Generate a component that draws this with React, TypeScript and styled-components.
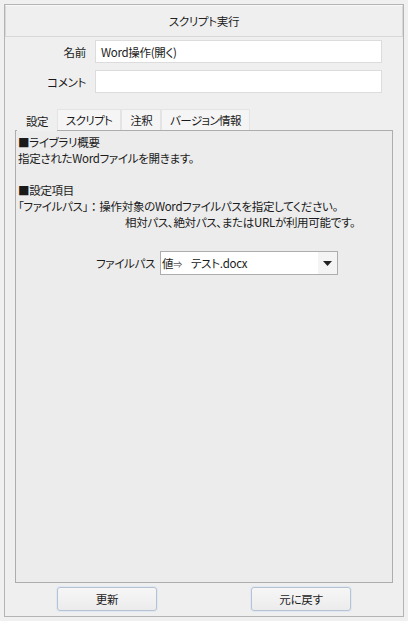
import React from "react";
import styled, { createGlobalStyle } from "styled-components";

const GlobalStyle = createGlobalStyle`
  html, body { margin: 0; padding: 0; background: #f0f0f0; }
  body {
    font-family: "Noto Sans CJK JP", "Noto Sans", sans-serif;
    font-size: 11.5px;
    letter-spacing: -0.3px;
    color: #1a1a1a;
    font-feature-settings: "palt";
  }
`;

const Page = styled.div`
  padding: 4px;
  width: 408px;
  height: 621px;
  box-sizing: border-box;
`;

const Frame = styled.div`
  width: 400px;
  height: 613px;
  box-sizing: border-box;
  border: 1px solid #b4b4b4;
  background: #efefef;
  display: flex;
  flex-direction: column;
`;

const Header = styled.div`
  height: 32px;
  box-sizing: border-box;
  border: 1px solid #d8d8d8;
  border-top-color: #f8f8f8;
  display: flex;
  align-items: center;
  justify-content: center;
  color: #222;
`;

const Form = styled.div`
  display: grid;
  grid-template-columns: 81px 287px;
  column-gap: 9px;
  row-gap: 7px;
  padding: 3px 0 0 0;
`;

const Label = styled.div`
  text-align: right;
  align-self: center;
`;

const TextBox = styled.div`
  height: 23px;
  box-sizing: border-box;
  background: #fff;
  border: 1px solid #dcdcdc;
  display: flex;
  align-items: center;
  padding-left: 5px;
`;

const TabArea = styled.div`
  margin: 15px 0 0 10px;
  width: 378px;
  display: flex;
  flex-direction: column;
`;

const TabStrip = styled.div`
  display: flex;
  padding-left: 2px;
  height: 22px;
  align-items: flex-end;
`;

const Tab = styled.div<{ $active?: boolean }>`
  height: ${(p) => (p.$active ? "22px" : "21px")};
  box-sizing: border-box;
  padding: 0 8px;
  display: flex;
  align-items: center;
  background: ${(p) => (p.$active ? "#efefef" : "#f5f5f5")};
  border: 1px solid ${(p) => (p.$active ? "#efefef" : "#e4e4e4")};
  border-bottom: none;
  letter-spacing: -0.6px;
  position: relative;
  top: ${(p) => (p.$active ? "1px" : "0")};
`;

const Panel = styled.div`
  height: 453px;
  box-sizing: border-box;
  border: 1px solid #adadad;
  background: #ececec;
  padding: 3px 0 0 2px;
  display: flex;
  flex-direction: column;
`;

const Line = styled.div<{ $indent?: number }>`
  height: 16px;
  line-height: 16px;
  white-space: pre;
  padding-left: ${(p) => p.$indent ?? 0}px;
`;

const Wide = styled.span`
  font-feature-settings: normal;
`;

const FieldRow = styled.div`
  display: flex;
  align-items: center;
  margin-top: 21px;
  padding-left: 78px;
  gap: 10px;
`;

const FieldLabel = styled.span`
  width: 54px;
  text-align: right;
  white-space: nowrap;
`;

const Combo = styled.div`
  width: 178px;
  height: 24px;
  box-sizing: border-box;
  border: 1px solid #adadad;
  background: #fff;
  display: flex;
  align-items: center;
`;

const ValueTag = styled.span`
  padding-left: 1px;
  width: 29px;
  flex: none;
  color: #222;
`;

const Arrowish = styled.span`
  font-size: 9px;
  color: #555;
`;

const ComboText = styled.span`
  flex: 1;
`;

const DropButton = styled.div`
  width: 19px;
  align-self: stretch;
  background: #f4f4f4;
  display: flex;
  align-items: center;
  justify-content: center;
`;

const Footer = styled.div`
  display: flex;
  justify-content: space-between;
  padding: 4px 52px 0 52px;
`;

const Button = styled.button`
  width: 100px;
  height: 24px;
  box-sizing: border-box;
  border: 1px solid #b7c3d2;
  border-radius: 3px;
  background: linear-gradient(#f6f6f6, #ececec);
  box-shadow: 0 0 0 1px #dfe8f3;
  font-family: inherit;
  font-size: 11.5px;
  letter-spacing: -0.3px;
  color: #222;
  font-feature-settings: "palt";
  padding: 0;
`;

export default function App() {
  return (
    <>
      <GlobalStyle />
      <Page>
        <Frame>
          <Header>スクリプト実行</Header>
          <Form>
            <Label>名前</Label>
            <TextBox>Word操作(開く)</TextBox>
            <Label>コメント</Label>
            <TextBox />
          </Form>
          <TabArea>
            <TabStrip>
              <Tab $active>設定</Tab>
              <Tab>スクリプト</Tab>
              <Tab>注釈</Tab>
              <Tab>バージョン情報</Tab>
            </TabStrip>
            <Panel>
              <Line>■ライブラリ概要</Line>
              <Line>指定されたWordファイルを開きます。</Line>
              <Line />
              <Line>■設定項目</Line>
              <Line>
                「ファイルパス」<Wide>：</Wide>操作対象のWordファイルパスを指定してください。
              </Line>
              <Line $indent={107}>相対パス、絶対パス、またはURLが利用可能です。</Line>
              <FieldRow>
                <FieldLabel>ファイルパス</FieldLabel>
                <Combo>
                  <ValueTag>
                    値<Arrowish>⇒</Arrowish>
                  </ValueTag>
                  <ComboText>テスト.docx</ComboText>
                  <DropButton>
                    <svg width="9" height="5" viewBox="0 0 9 5">
                      <path d="M0 0 H9 L4.5 5 Z" fill="#222" />
                    </svg>
                  </DropButton>
                </Combo>
              </FieldRow>
            </Panel>
          </TabArea>
          <Footer>
            <Button>更新</Button>
            <Button>元に戻す</Button>
          </Footer>
        </Frame>
      </Page>
    </>
  );
}
